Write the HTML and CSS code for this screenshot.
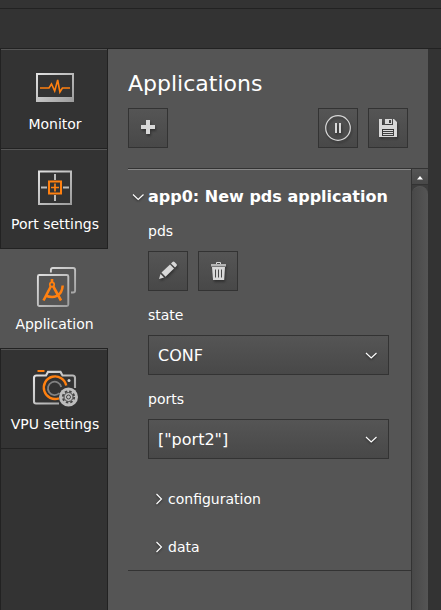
FILE: index.html
```html
<!DOCTYPE html>
<html lang="en">
<head>
<meta charset="utf-8">
<title>Applications</title>
<link rel="stylesheet" href="styles.css">
</head>
<body>
<svg width="0" height="0" aria-hidden="true">
  <defs>
    <linearGradient id="silver" gradientUnits="userSpaceOnUse" x1="0" y1="0" x2="40" y2="40">
      <stop offset="0" stop-color="#eee"/><stop offset="1" stop-color="#999"/>
    </linearGradient>
  </defs>
</svg>
<div class="menubar"></div>
<div class="toolbar"></div>
<div class="workspace">
  <nav class="sidebar">
    <a class="tab">
      <svg width="48" height="40" viewBox="0 0 48 40">
        <path fill="url(#silver)" fill-rule="evenodd" d="M6 5h38v29H6zM8 7v22h34V7z"/>
        <path fill="none" stroke="#ff8010" stroke-width="1.600" d="M10 20h9l2.500-4 3.200 7 3-11 2.200 12 2.500-4H40"/>
      </svg>
      <span>Monitor</span>
    </a>
    <a class="tab">
      <svg width="48" height="40" viewBox="0 0 48 40">
        <path fill="none" stroke="url(#silver)" stroke-width="2" d="M9 3.400h32v32.600H9z"/>
        <path fill="none" stroke="#bbb" stroke-width="2" d="M25 6v6M25 27v6M11 19.500h6M33 19.500h6"/>
        <path fill="none" stroke="#ff8010" stroke-width="2" d="M19 13.500h12v12H19z"/>
        <path fill="none" stroke="#ff8010" stroke-width="1.700" d="M21 19.500h8M25 15.500v8"/>
      </svg>
      <span>Port settings</span>
    </a>
    <a class="tab active">
      <svg width="48" height="40" viewBox="0 0 48 40">
        <g transform="translate(1 0)">
          <rect x="6.900" y="7" width="30.400" height="31" rx="1.500" fill="none" stroke="url(#silver)" stroke-width="1.900"/>
          <path fill="none" stroke="url(#silver)" stroke-width="1.900" d="M19.900 4.500V2q0-2 2-2h20.200q2 0 2 2v20.500q0 2-2 2H40"/>
          <circle cx="21" cy="16.500" r="2.200" fill="none" stroke="#ff8010" stroke-width="1.700"/>
          <path fill="none" stroke="#ff8010" stroke-width="2.600" d="M21 11v3.500M20 18l-7.500 14.500M22 18l8 14.500M14.500 27.500c8 3.500 16.500 1 17.200-10"/>
        </g>
      </svg>
      <span>Application</span>
    </a>
    <a class="tab">
      <svg width="48" height="40" viewBox="0 0 48 40">
        <path fill="none" stroke="url(#silver)" stroke-width="2.100" d="M29 35.500H6q-2 0-2-2V10q0-2.500 2.500-2.500H16l2-3.600h12.500l2 3.600h10q2.500 0 2.500 2.500v10"/>
        <path d="M7.500 2h7v2h-7z" fill="#ff8010"/>
        <path fill="none" stroke="#ff8010" stroke-width="2.400" d="M29 30.300A11.300 11.300 0 1 1 36.200 17.500"/>
        <path fill="none" stroke="#828282" stroke-width="1.800" d="M29.500 25A6.700 6.700 0 1 1 31.200 19"/>
        <circle cx="39" cy="12.500" r="1.500" fill="#d0d0d0"/>
        <circle cx="38.500" cy="29" r="9.500" fill="#bdbdbd"/>
        <circle cx="38.500" cy="29" r="5.700" fill="none" stroke="#444" stroke-width="1.800" stroke-dasharray="2.480 2"/>
        <circle cx="38.500" cy="29" r="4.500" fill="none" stroke="#444" stroke-width="1"/>
        <circle cx="38.500" cy="29" r="2" fill="none" stroke="#444" stroke-width="1"/>
      </svg>
      <span>VPU settings</span>
    </a>
  </nav>
  <main class="panel">
    <h1>Applications</h1>
    <div class="actions">
      <button class="btn" aria-label="Add"><svg width="38" height="38"><path fill="#d8d8d8" d="M17 11h4v5h5v4h-5v5h-4v-5h-5v-4h5z"/></svg></button>
      <span class="spacer"></span>
      <button class="btn" aria-label="Pause"><svg width="38" height="38"><circle cx="19" cy="19" r="12.300" fill="none" stroke="#d8d8d8" stroke-width="1.200"/><path fill="#d8d8d8" d="M16 14h2v10h-2zM20 14h2v10h-2z"/></svg></button>
      <button class="btn" aria-label="Save"><svg width="38" height="38"><path fill="#d8d8d8" fill-rule="evenodd" d="M10 10h3v6h11v-6h1l3 3v15H10zM13 20v7h12v-7zM16 10h7v5h-7zM20 11v3h2v-3z"/><path stroke="#d8d8d8" stroke-width="1" d="M14 21.500h10M14 23.500h10M14 25.500h10"/></svg></button>
    </div>
    <div class="scroller">
      <div class="content">
        <div class="title"><svg class="chev" width="20" height="20"><path d="M5 7.500l5.200 5L15.500 7.500"/></svg><b>app0: New pds application</b></div>
        <div class="fields">
          <div class="label">pds</div>
          <div class="row">
            <button class="btn" aria-label="Edit"><svg width="38" height="38"><path fill="#d8d8d8" d="M10 27l1.500-5 3.500 3.500zM12.500 20.500l8.500-8 4 4-8.500 8.200zM22 11.500l1.500-1.500q1-.8 2 0l2 2q.8 1 0 2L26 15.500z"/></svg></button>
            <button class="btn" aria-label="Delete"><svg width="38" height="38"><path fill="none" stroke="#d8d8d8" d="M17.500 13v-2.500h4V13"/><path fill="#b5b5b5" d="M12 12h15v2.500H12z"/><path fill="#d8d8d8" d="M13 15h13l-.8 13H14z"/><path stroke="#484848" d="M16.500 17.500v8M19.500 17.500v8M22.500 17.500v8"/></svg></button>
          </div>
          <div class="label">state</div>
          <div class="select"><span>CONF</span><svg class="chev" width="20" height="20"><path d="M5 8l5.200 5L15.500 8"/></svg></div>
          <div class="label">ports</div>
          <div class="select"><span>["port2"]</span><svg class="chev" width="20" height="20"><path d="M5 8l5.200 5L15.500 8"/></svg></div>
          <div class="group"><svg class="chev" width="20" height="20"><path d="M8.500 5l5 5-5 5"/></svg>configuration</div>
          <div class="group"><svg class="chev" width="20" height="20"><path d="M8.500 5l5 5-5 5"/></svg>data</div>
        </div>
      </div>
      <div class="scrollbar">
        <div class="up"><svg width="16" height="16"><path fill="#fff" d="M5 10.500L8 7l3 3.500z"/></svg></div>
        <div class="thumb"></div>
      </div>
    </div>
  </main>
</div>
</body>
</html>
```
FILE: styles.css
```css
* { box-sizing: border-box; }
body {
  margin: 0;
  height: 610px;
  overflow: hidden;
  display: flex;
  flex-direction: column;
  background: #333;
  color: #fff;
  font: 14px/20px "DejaVu Sans", sans-serif;
}
svg { display: block; flex: none; }
.menubar { height: 9px; flex: none; border-bottom: 1px solid #222; }
.toolbar { height: 40px; flex: none; border-bottom: 1px solid #222; }
.workspace { flex: 1; width: 428px; display: flex; min-height: 0; background: #555; }
.sidebar {
  width: 108px;
  flex: none;
  background: #333;
  border-left: 1px solid #222;
  border-right: 1px solid #222;
}
.tab {
  height: 100px;
  display: flex;
  flex-direction: column;
  align-items: center;
  padding-top: 18px;
  border-top: 1px solid #555;
  border-bottom: 1px solid #222;
  white-space: nowrap;
}
.tab svg { overflow: visible; }
.tab span { margin-top: 6px; line-height: 20px; padding-left: 2px; }
.active { background: #555; margin: 0 -1px; }
.active span { padding-left: 1px; }
.panel { flex: 1; display: flex; flex-direction: column; padding: 20px 0 0 20px; min-width: 0; }
h1 { margin: 0; font-size: 22px; font-weight: 400; line-height: 30px; }
.actions { display: flex; gap: 10px; margin: 9px 20px 20px 0; }
.spacer { flex: 1; }
.btn {
  width: 40px;
  height: 40px;
  padding: 0;
  border: 1px solid #333;
  background: linear-gradient(#555, #484848);
}
.btn svg { filter: drop-shadow(1px 2px 1px rgba(0, 0, 0, .35)); }
.scroller { flex: 1; display: flex; min-height: 0; border-top: 1px solid #333; }
.content { flex: 1; height: 402px; border-top: 1px solid #888; border-bottom: 1px solid #333; padding-top: 17px; }
.title { display: flex; align-items: center; height: 20px; font-size: 16px; white-space: nowrap; }
.chev { filter: drop-shadow(0 1px 1px rgba(0, 0, 0, .5)); }
.chev path { fill: none; stroke: #fff; stroke-width: 1.15; }
.fields { padding: 9px 22px 0 20px; }
.label { height: 30px; line-height: 30px; margin-bottom: 5px; }
.row { display: flex; gap: 10px; margin-bottom: 9px; }
.select {
  height: 40px;
  display: flex;
  align-items: center;
  justify-content: space-between;
  padding: 0 7px 0 9px;
  margin-bottom: 9px;
  border: 1px solid #333;
  background: linear-gradient(#555, #484848);
  font-size: 16px;
}
.select span { padding-top: 2px; }
.group { display: flex; align-items: center; height: 20px; margin-bottom: 28px; }
.select + .group { margin-top: 30px; }
.scrollbar { width: 17px; flex: none; display: flex; flex-direction: column; border-left: 1px solid #333; background: #3c3c3c; }
.up { height: 16px; flex: none; background: linear-gradient(#555, #484848); border-bottom: 1px solid #333; }
.thumb { flex: 1; margin-top: 1px; border-radius: 8px 8px 0 0; background: linear-gradient(to right, #484848, #555); border-top: 1px solid #555; }
```
